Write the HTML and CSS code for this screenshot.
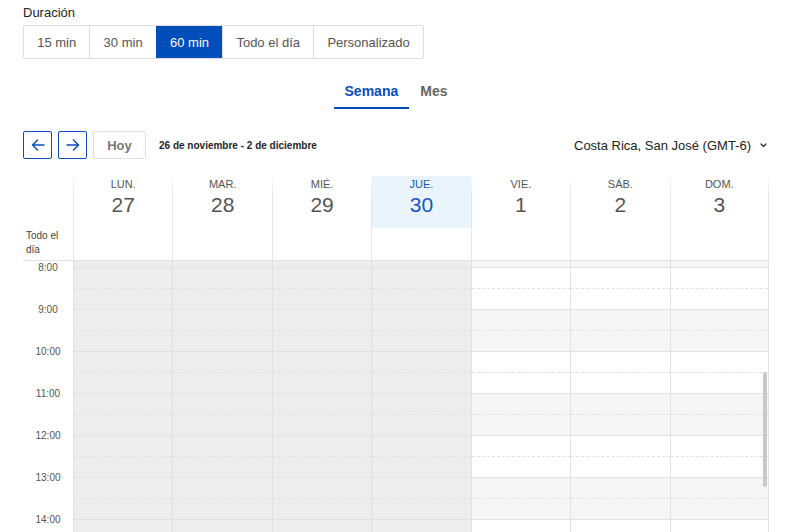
FILE: index.html
```html
<!DOCTYPE html>
<html lang="es">
<head>
<meta charset="utf-8">
<title>Calendario</title>
<link rel="stylesheet" href="styles.css">
</head>
<body>
<div class="page">
  <div class="dur-label">Duración</div>
  <div class="seg">
    <button class="seg-btn">15 min</button>
    <button class="seg-btn">30 min</button>
    <button class="seg-btn active">60 min</button>
    <button class="seg-btn">Todo el día</button>
    <button class="seg-btn">Personalizado</button>
  </div>

  <div class="tabs">
    <span class="tab active">Semana</span>
    <span class="tab">Mes</span>
  </div>

  <div class="nav">
    <button class="arrow-btn" aria-label="Anterior">
      <svg width="14" height="12" viewBox="0 0 14 12"><path d="M13 6H1.5M6.5 1L1.5 6l5 5" fill="none" stroke="#0a4fb8" stroke-width="1.5" stroke-linecap="round" stroke-linejoin="round"/></svg>
    </button>
    <button class="arrow-btn" aria-label="Siguiente">
      <svg width="14" height="12" viewBox="0 0 14 12"><path d="M1 6h11.5M7.5 1l5 5-5 5" fill="none" stroke="#0a4fb8" stroke-width="1.5" stroke-linecap="round" stroke-linejoin="round"/></svg>
    </button>
    <button class="today-btn">Hoy</button>
    <span class="range">26 de noviembre - 2 de diciembre</span>
    <span class="tz">Costa Rica, San José (GMT-6)
      <svg class="chev" width="7" height="5" viewBox="0 0 7 5"><path d="M1 1l2.5 2.5L6 1" fill="none" stroke="#333" stroke-width="1.3" stroke-linecap="round" stroke-linejoin="round"/></svg>
    </span>
  </div>

  <div class="cal">
    <div class="cal-head">
      <div class="allday-label">Todo el<br>día</div>
      <div class="dh"><div class="dh-top"><div class="dn">LUN.</div><div class="dd">27</div></div><div class="dh-all"></div></div>
      <div class="dh"><div class="dh-top"><div class="dn">MAR.</div><div class="dd">28</div></div><div class="dh-all"></div></div>
      <div class="dh"><div class="dh-top"><div class="dn">MIÉ.</div><div class="dd">29</div></div><div class="dh-all"></div></div>
      <div class="dh today"><div class="dh-top"><div class="dn">JUE.</div><div class="dd">30</div></div><div class="dh-all"></div></div>
      <div class="dh"><div class="dh-top"><div class="dn">VIE.</div><div class="dd">1</div></div><div class="dh-all"></div></div>
      <div class="dh"><div class="dh-top"><div class="dn">SÁB.</div><div class="dd">2</div></div><div class="dh-all"></div></div>
      <div class="dh last"><div class="dh-top"><div class="dn">DOM.</div><div class="dd">3</div></div><div class="dh-all"></div></div>
    </div>

    <div class="cal-body">
      <div class="times">
        <div class="t">8:00</div>
        <div class="t">9:00</div>
        <div class="t">10:00</div>
        <div class="t">11:00</div>
        <div class="t">12:00</div>
        <div class="t">13:00</div>
        <div class="t">14:00</div>
      </div>
      <div class="col off"><div class="strip"></div><div class="slot"></div><div class="slot"></div><div class="slot"></div><div class="slot"></div><div class="slot"></div><div class="slot"></div><div class="slot"></div></div>
      <div class="col off"><div class="strip"></div><div class="slot"></div><div class="slot"></div><div class="slot"></div><div class="slot"></div><div class="slot"></div><div class="slot"></div><div class="slot"></div></div>
      <div class="col off"><div class="strip"></div><div class="slot"></div><div class="slot"></div><div class="slot"></div><div class="slot"></div><div class="slot"></div><div class="slot"></div><div class="slot"></div></div>
      <div class="col off"><div class="strip"></div><div class="slot"></div><div class="slot"></div><div class="slot"></div><div class="slot"></div><div class="slot"></div><div class="slot"></div><div class="slot"></div></div>
      <div class="col"><div class="strip"></div><div class="slot"></div><div class="slot alt"></div><div class="slot"></div><div class="slot alt"></div><div class="slot"></div><div class="slot alt"></div><div class="slot"></div></div>
      <div class="col"><div class="strip"></div><div class="slot"></div><div class="slot alt"></div><div class="slot"></div><div class="slot alt"></div><div class="slot"></div><div class="slot alt"></div><div class="slot"></div></div>
      <div class="col last"><div class="strip"></div><div class="slot"></div><div class="slot alt"></div><div class="slot"></div><div class="slot alt"></div><div class="slot"></div><div class="slot alt"></div><div class="slot"></div></div>
    </div>
    <div class="scroll-thumb"></div>
  </div>
</div>
</body>
</html>
```

FILE: styles.css
```css
* { box-sizing: border-box; }

html, body {
  margin: 0;
  padding: 0;
  height: 532px;
  overflow: hidden;
  background: #fff;
  font-family: "Liberation Sans", Arial, sans-serif;
  color: #222;
}

.page {
  padding: 5px 0 0 23px;
  width: 769px;
}

.dur-label {
  font-size: 13px;
  line-height: 16px;
  color: #222;
}

.seg {
  display: inline-flex;
  margin-top: 4px;
  border: 1px solid #dedede;
  border-radius: 2px;
  height: 34px;
}

.seg-btn {
  font-family: inherit;
  font-size: 13px;
  color: #555;
  background: #fff;
  border: none;
  border-left: 1px solid #dedede;
  padding: 0 13.2px;
  margin: 0;
  height: 32px;
  cursor: pointer;
}
.seg-btn:first-child { border-left: none; }
.seg-btn.active {
  background: #004eba;
  color: #fff;
  border-left-color: #004eba;
}

.tabs {
  display: flex;
  justify-content: center;
  margin-top: 17px;
  width: 746px;
}
.tab {
  font-size: 14px;
  font-weight: bold;
  line-height: 16px;
  color: #666;
  padding: 7px 11px 8px;
  border-bottom: 2px solid transparent;
}
.tab.active {
  color: #0a4dbf;
  border-bottom-color: #004eba;
}

.nav {
  display: flex;
  align-items: center;
  height: 28px;
  margin-top: 22px;
  width: 746px;
}
.arrow-btn {
  width: 29px;
  height: 28px;
  border: 1px solid #0a4fb8;
  border-radius: 2px;
  background: #fff;
  padding: 0;
  margin: 0 6px 0 0;
  display: flex;
  align-items: center;
  justify-content: center;
}
.today-btn {
  height: 28px;
  width: 53px;
  border: 1px solid #e2e2e2;
  border-radius: 2px;
  background: #fff;
  font-family: inherit;
  font-size: 13px;
  font-weight: bold;
  color: #777;
  padding: 0;
  margin: 0;
}
.range {
  margin-left: 13px;
  font-size: 10px;
  font-weight: bold;
  color: #1f1f1f;
}
.tz {
  margin-left: auto;
  font-size: 13px;
  color: #222;
  display: flex;
  align-items: center;
  padding-right: 2px;
}
.chev { margin-left: 9px; }

.cal {
  position: relative;
  margin-top: 17px;
  width: 746px;
}

.cal-head {
  display: grid;
  grid-template-columns: 50px repeat(7, 1fr);
  height: 85px;
  border-bottom: 1px solid #e2e2e2;
}
.allday-label {
  align-self: end;
  font-size: 10px;
  line-height: 14px;
  color: #444;
  padding: 0 0 3px 3px;
}
.dh {
  display: flex;
  flex-direction: column;
  border-left: 1px solid #e6e6e6;
  border-image: linear-gradient(to bottom, rgba(230,230,230,0), #e6e6e6 18px) 1;
}
.dh.last {
  border-right: 1px solid #e6e6e6;
}
.dh-top {
  height: 52px;
  text-align: center;
  padding-top: 2px;
}
.dh-all { flex: 1; }
.dn {
  font-size: 11px;
  line-height: 13px;
  color: #555;
}
.dd {
  font-size: 21px;
  line-height: 24px;
  margin-top: 2px;
  color: #555;
}
.dh.today .dh-top { background: #e9f4fd; }
.dh.today .dn,
.dh.today .dd { color: #1a55c2; }

.cal-body {
  display: grid;
  grid-template-columns: 50px repeat(7, 1fr);
}
.times {
  display: flex;
  flex-direction: column;
  padding-top: 1px;
}
.t {
  height: 42px;
  flex: none;
  font-size: 10px;
  line-height: 12px;
  text-align: center;
  color: #555;
}
.col {
  border-left: 1px solid #e2e2e2;
  background: #fff;
}
.col.last { border-right: 1px solid #e2e2e2; }
.strip {
  height: 6px;
  background: #f6f6f6;
}
.slot {
  position: relative;
  height: 42px;
  border-top: 1px solid #e2e2e2;
  background: #fff;
}
.slot::after {
  content: "";
  position: absolute;
  left: 0;
  right: 0;
  top: 20px;
  border-top: 1px dashed #e2e2e2;
}
.slot.alt { background: #f6f6f6; }
.col.off .strip,
.col.off .slot { background: #ededed; }

.scroll-thumb {
  position: absolute;
  left: 740px;
  top: 196px;
  width: 4px;
  height: 115px;
  border-radius: 2px;
  background: #c9c9c9;
}
```
